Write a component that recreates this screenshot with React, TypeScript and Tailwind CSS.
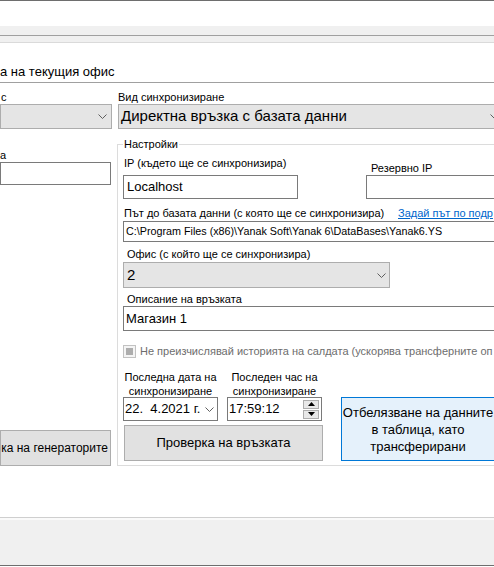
import React from "react";

const Chevron = () => (
  <svg width="9" height="5" viewBox="0 0 9 5" className="shrink-0">
    <polyline points="0.5,0.5 4.5,4.5 8.5,0.5" fill="none" stroke="#5f5f5f" strokeWidth="1" />
  </svg>
);

const Tri = ({ up }: { up?: boolean }) => (
  <svg width="7" height="4" viewBox="0 0 7 4">
    <polygon points={up ? "0,4 7,4 3.5,0" : "0,0 7,0 3.5,4"} fill="#000" />
  </svg>
);

export default function App() {
  return (
    <div className="w-[494px] h-[567px] overflow-hidden bg-white text-black font-['Liberation_Sans',Arial,sans-serif] flex flex-col">
      {/* top chrome */}
      <div className="h-px shrink-0 bg-[#6e6e6e]" />
      <div className="h-[25px] shrink-0 bg-white" />
      <div className="h-[9px] shrink-0 bg-[#f0f0f0]" />
      <div className="h-px shrink-0 bg-[#a0a0a0]" />
      <div className="h-[6px] shrink-0 bg-[#f0f0f0]" />
      <div className="h-px shrink-0 bg-[#dadada]" />

      {/* content */}
      <div className="h-[474px] shrink-0 flex flex-col">
        <div className="h-[39px] pt-[21px] text-[13px] leading-[15px] whitespace-nowrap">а на текущия офис</div>
        <div className="h-px bg-[#a0a0a0]" />
        <div className="flex">
          {/* left column */}
          <div className="w-[117px] shrink-0 flex flex-col">
            <div className="mt-[7px] h-[14px] text-[11px] leading-[14px] pl-[1px]">с</div>
            <div className="h-[25px] w-[112px] bg-[#e5e5e5] border border-[#adadad] flex items-center justify-end pr-[4px]">
              <Chevron />
            </div>
            <div className="mt-[19px] h-[14px] text-[11px] leading-[14px]">а</div>
            <div className="h-[23px] w-[111px] bg-white border border-[#7a7a7a]" />
            <div className="mt-[245px] h-[36px] w-[111px] bg-[#e1e1e1] border border-[#adadad] flex items-center justify-end pr-[2px] text-[12px] whitespace-nowrap">
              ка на генераторите
            </div>
          </div>

          {/* right column */}
          <div className="flex-1 min-w-0 flex flex-col">
            <div className="mt-[7px] h-[14px] text-[11px] leading-[14px] pl-[1px] whitespace-nowrap">Вид синхронизиране</div>
            <div className="ml-[1px] h-[25px] w-[386px] shrink-0 bg-[#e5e5e5] border border-[#adadad] flex items-center justify-between pl-[2px] pr-[4px] text-[15px] whitespace-nowrap">
              <span>Директна връзка с базата данни</span>
              <Chevron />
            </div>

            {/* group box */}
            <div className="relative mt-[15px] w-[430px] shrink-0 border-t border-l border-b border-[#dcdcdc] pl-[5px] pb-[4px] flex flex-col">
              <span className="absolute top-[-8px] left-[5px] bg-white px-[1px] text-[11px] leading-[14px] whitespace-nowrap">Настройки</span>

              {/* IP row */}
              <div className="flex">
                <div className="w-[175px] shrink-0 flex flex-col">
                  <div className="mt-[11px] h-[14px] pl-[1px] text-[11px] leading-[14px] whitespace-nowrap">IP (където ще се синхронизира)</div>
                  <div className="mt-[5px] h-[24px] bg-white border border-[#7a7a7a] flex items-center pl-[3px] text-[13px]">Localhost</div>
                </div>
                <div className="ml-[68px] w-[200px] shrink-0 flex flex-col">
                  <div className="mt-[16px] h-[14px] pl-[5px] text-[11px] leading-[14px] whitespace-nowrap">Резервно IP</div>
                  <div className="h-[24px] bg-white border border-[#7a7a7a]" />
                </div>
              </div>

              {/* path */}
              <div className="mt-[7px] flex h-[14px] text-[11px] leading-[14px] whitespace-nowrap">
                <div className="w-[275px] shrink-0 pl-[1px]">Път до базата данни (с която ще се синхронизира)</div>
                <span className="text-[#0066cc] underline">Задай път по подр</span>
              </div>
              <div className="mt-[1px] h-[21px] w-[420px] shrink-0 bg-white border border-[#7a7a7a] flex items-center pl-[2px] text-[10.75px] whitespace-nowrap">
                C:\Program Files (x86)\Yanak Soft\Yanak 6\DataBases\Yanak6.YS
              </div>

              {/* office */}
              <div className="mt-[5px] h-[14px] pl-[4px] text-[11px] leading-[14px] whitespace-nowrap">Офис (с който ще се синхронизира)</div>
              <div className="mt-[1px] h-[26px] w-[267px] bg-[#e5e5e5] border border-[#adadad] flex items-center justify-between pl-[3px] pr-[3px] text-[15px]">
                <span>2</span>
                <Chevron />
              </div>

              {/* description */}
              <div className="mt-[4px] h-[14px] pl-[4px] text-[11px] leading-[14px] whitespace-nowrap">Описание на връзката</div>
              <div className="h-[25px] w-[420px] shrink-0 bg-white border border-[#7a7a7a] flex items-center pl-[2px] text-[13px]">Магазин 1</div>

              {/* checkbox */}
              <div className="mt-[13px] h-[14px] flex items-center whitespace-nowrap">
                <div className="w-[13px] h-[13px] border border-[#c2c2c2] bg-[#f4f4f4] flex items-center justify-center shrink-0">
                  <div className="w-[7px] h-[7px] bg-[#adadad]" />
                </div>
                <span className="ml-[4px] text-[11px] leading-[14px] text-[#6d6d6d]">
                  Не преизчислявай историята на салдата (ускорява трансферните оп
                </span>
              </div>

              {/* dates + buttons */}
              <div className="mt-[12px] flex">
                <div className="w-[200px] shrink-0 flex flex-col">
                  <div className="flex text-[11px] leading-[14px] text-center">
                    <div className="w-[95px] shrink-0">Последна дата на<br />синхронизиране</div>
                    <div className="ml-[9px] w-[95px] shrink-0">Последен час на<br />синхронизиране</div>
                  </div>
                  <div className="mt-[-1px] flex">
                    <div className="w-[95px] h-[24px] shrink-0 bg-white border border-[#7a7a7a] flex items-center justify-between pl-[1px] pr-[3px] text-[13px] whitespace-pre">
                      <span>22.  4.2021 г.</span>
                      <Chevron />
                    </div>
                    <div className="ml-[9px] w-[95px] h-[24px] shrink-0 bg-white border border-[#7a7a7a] flex items-center justify-between pl-[1px] pr-[2px] text-[13px]">
                      <span>17:59:12</span>
                      <div className="flex flex-col gap-[1px]">
                        <div className="w-[16px] h-[9px] bg-[#e8e8e8] border border-[#adadad] flex items-center justify-center"><Tri up /></div>
                        <div className="w-[16px] h-[9px] bg-[#e8e8e8] border border-[#adadad] flex items-center justify-center"><Tri /></div>
                      </div>
                    </div>
                  </div>
                  <div className="ml-[1px] mt-[4px] h-[36px] w-[199px] bg-[#e1e1e1] border border-[#adadad] flex items-center justify-center text-[13px] whitespace-nowrap">
                    Проверка на връзката
                  </div>
                </div>
                <div className="ml-[18px] mt-[27px] h-[64px] w-[154px] shrink-0 bg-[#e5f1fb] border border-[#0078d7] flex items-center justify-center text-center text-[13px] leading-[17px] whitespace-nowrap">
                  Отбелязване на данните<br />в таблица, като<br />трансферирани
                </div>
              </div>
            </div>
          </div>
        </div>
      </div>

      {/* bottom chrome */}
      <div className="h-px shrink-0 bg-[#cfcfcf]" />
      <div className="h-[2px] shrink-0 bg-[#fafafa]" />
      <div className="h-[45px] shrink-0 bg-[#f0f0f0]" />
      <div className="h-px shrink-0 bg-[#6e6e6e]" />
      <div className="h-px shrink-0 bg-white" />
    </div>
  );
}
